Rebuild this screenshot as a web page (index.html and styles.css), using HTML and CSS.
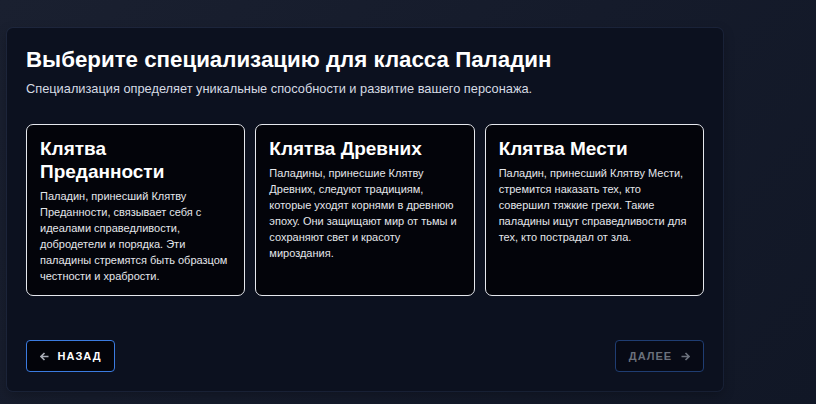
FILE: index.html
```html
<!DOCTYPE html>
<html lang="ru">
<head>
<meta charset="utf-8">
<link rel="stylesheet" href="styles.css">
</head>
<body>
<div class="page">
  <section class="panel">
    <h1 class="title">Выберите специализацию для класса Паладин</h1>
    <p class="subtitle">Специализация определяет уникальные способности и развитие вашего персонажа.</p>
    <div class="cards">
      <div class="card">
        <h2 class="card-title">Клятва Преданности</h2>
        <p class="card-text">Паладин, принесший Клятву Преданности, связывает себя с идеалами справедливости, добродетели и порядка. Эти паладины стремятся быть образцом честности и храбрости.</p>
      </div>
      <div class="card">
        <h2 class="card-title">Клятва Древних</h2>
        <p class="card-text">Паладины, принесшие Клятву Древних, следуют традициям, которые уходят корнями в древнюю эпоху. Они защищают мир от тьмы и сохраняют свет и красоту мироздания.</p>
      </div>
      <div class="card">
        <h2 class="card-title">Клятва Мести</h2>
        <p class="card-text">Паладин, принесший Клятву Мести, стремится наказать тех, кто совершил тяжкие грехи. Такие паладины ищут справедливости для тех, кто пострадал от зла.</p>
      </div>
    </div>
    <div class="actions">
      <button class="btn btn-back"><svg class="arrow" width="9" height="9" viewBox="0 0 9 9"><path d="M8.5 4.5H1M4.5 1L1 4.5L4.5 8" fill="none" stroke="currentColor" stroke-width="1.6"/></svg>Назад</button>
      <button class="btn btn-next" disabled>Далее<svg class="arrow" width="9" height="9" viewBox="0 0 9 9"><path d="M0.5 4.5H8M4.5 1L8 4.5L4.5 8" fill="none" stroke="currentColor" stroke-width="1.6"/></svg></button>
    </div>
  </section>
</div>
</body>
</html>
```
FILE: styles.css
```css
html, body {
  margin: 0;
  height: 100%;
}
body {
  background: linear-gradient(135deg, #1a2030 0%, #151b2b 50%, #111726 100%);
  font-family: "Liberation Sans", Arial, sans-serif;
  color: #fff;
}
.page {
  padding: 28px 93px 0 7px;
}
.panel {
  width: 716px;
  box-sizing: border-box;
  background: #0c111f;
  border-radius: 6px;
  padding: 18px 19px 19px;
  box-shadow: 0 0 0 1px rgba(40, 55, 90, 0.35), 0 4px 12px rgba(0, 0, 0, 0.25);
  display: flex;
  flex-direction: column;
  min-height: 363px;
}
.title {
  margin: 0;
  font-size: 22.3px;
  line-height: 28px;
  font-weight: 700;
}
.subtitle {
  margin: 6px 0 0;
  font-size: 12.8px;
  line-height: 18px;
  color: #d6dbe4;
}
.cards {
  margin-top: 26px;
  display: grid;
  grid-template-columns: repeat(3, 1fr);
  gap: 10px;
}
.card {
  background: #03040a;
  border: 1px solid #e6e8ee;
  border-radius: 7px;
  padding: 12px 13px 11px;
  min-height: 144px;
}
.card-title {
  margin: 0 0 5px;
  font-size: 19px;
  line-height: 23px;
  font-weight: 700;
}
.card-text {
  margin: 0;
  font-size: 11px;
  line-height: 16px;
  color: #e4e6ea;
}
.actions {
  margin-top: auto;
  display: flex;
  justify-content: space-between;
}
.btn {
  height: 32px;
  width: 89px;
  box-sizing: border-box;
  border-radius: 4px;
  background: #03040a;
  font-family: "Liberation Sans", Arial, sans-serif;
  font-weight: 700;
  font-size: 11px;
  letter-spacing: 1px;
  text-transform: uppercase;
  display: flex;
  align-items: center;
  justify-content: center;
  gap: 9px;
  padding: 0;
}
.btn-back {
  border: 1px solid #3b7be0;
  color: #fff;
}
.btn-back .arrow {
  color: #a9adb7;
}
.btn-next {
  border: 1px solid #1f3d72;
  color: #6b717c;
  background: #070a15;
}
.arrow {
  flex: none;
}
```
